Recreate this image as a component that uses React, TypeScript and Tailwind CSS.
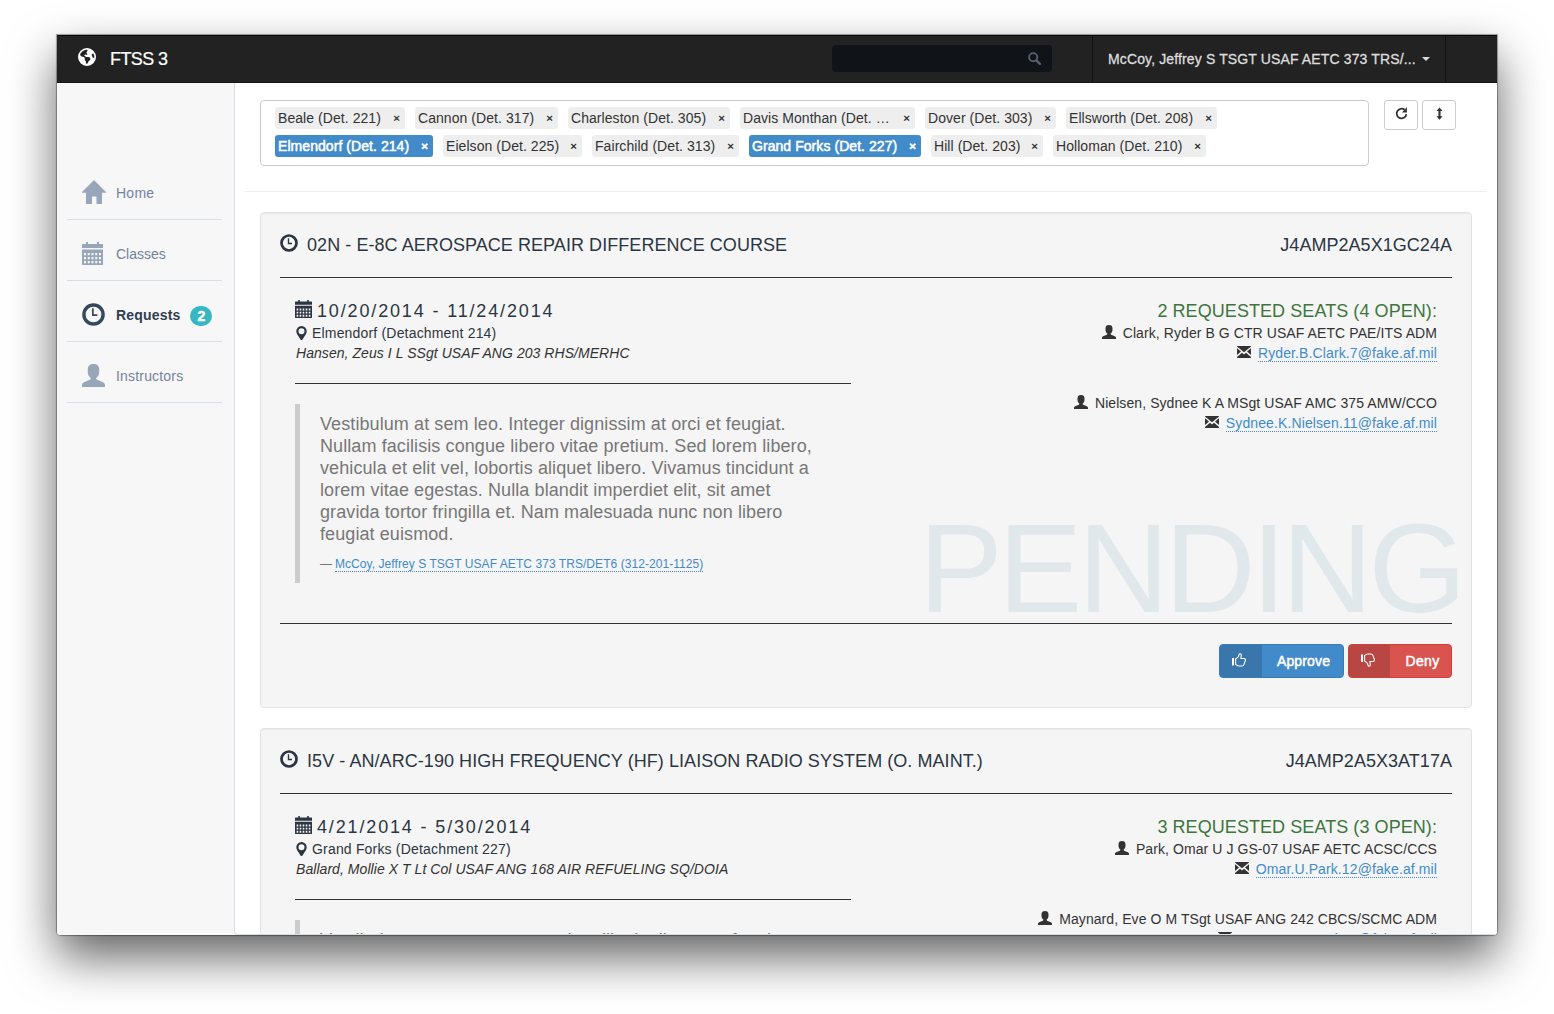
import React from "react";
import { FaEarthAmericas } from "react-icons/fa6";

type IconProps = { className?: string };

const HomeIcon = ({ className }: IconProps) => (
  <svg viewBox="0 0 24 24" fill="currentColor" className={className}>
    <path d="M12 0 0 12v.7h4V24h6v-7.5h4.500V24H20V12.700h4V12z" />
  </svg>
);

const CalendarIcon = ({ className }: IconProps) => (
  <svg viewBox="0 0 21 23" fill="currentColor" preserveAspectRatio="none" className={className}>
    <path d="M4 0h2v2h9V0h2v2h3.500l.5.500V6H0V2.500L.5 2H4z" />
    <path
      fillRule="evenodd"
      d="M0 7.500h21V22.500l-.5.500H.5l-.5-.500zM2 11v2.300h2V11zM5.750 11v2.300h2V11zM9.500 11v2.300h2V11zM13.250 11v2.300h2V11zM17 11v2.300h2V11zM2 15v2.300h2V15zM5.750 15v2.300h2V15zM9.500 15v2.300h2V15zM13.250 15v2.300h2V15zM17 15v2.300h2V15zM2 19v2.300h2V19zM5.750 19v2.300h2V19zM9.500 19v2.300h2V19zM13.250 19v2.300h2V19zM17 19v2.300h2V19z"
    />
  </svg>
);

const ClockIcon = ({ className }: IconProps) => (
  <svg viewBox="0 0 24 24" fill="none" stroke="currentColor" className={className}>
    <circle cx="12" cy="12" r="10" strokeWidth="3.6" />
    <path d="M11.300 5.500v7.200H16" strokeWidth="1.800" />
  </svg>
);

const UserIcon = ({ className }: IconProps) => (
  <svg viewBox="0 0 24 24" fill="currentColor" className={className}>
    <path d="M12 0C8 0 6 2 6 6v2c0 2.500 1 5 2.700 6.200.6.500.5 1.900-.3 2.300C5.500 17.700 2 19 .8 20 0 20.700 0 21.500 0 24h24c0-2.500 0-3.300-.8-4-1.200-1-4.700-2.300-7.600-3.500-.8-.4-.9-1.800-.3-2.300C17 13 18 10.500 18 8V6c0-4-2-6-6-6z" />
  </svg>
);

const PinIcon = ({ className }: IconProps) => (
  <svg viewBox="0 0 11 14" fill="currentColor" className={className}>
    <path
      fillRule="evenodd"
      d="M5.500 0A5.200 5.200 0 0 0 .3 5.200C.3 7 1.300 8.500 2.300 10l2.200 3.600c.4.600 1.600.6 2 0L8.700 10c1-1.500 2-3 2-4.800A5.200 5.200 0 0 0 5.500 0zm0 2.200a3 3 0 1 1 0 6 3 3 0 0 1 0-6z"
    />
  </svg>
);

const EnvelopeIcon = ({ className }: IconProps) => (
  <svg viewBox="0 0 14 12" fill="currentColor" className={className}>
    <path d="M0 0h14v.4L7 6.200 0 .4zM0 2.200 4 5.600 0 9zM14 2.200V9l-4-3.400zM5 6.700l2 1.700 2-1.700 5 4.200V12H0v-1.100z" />
  </svg>
);

const SearchIcon = ({ className }: IconProps) => (
  <svg viewBox="0 0 14 14" fill="none" stroke="currentColor" className={className}>
    <circle cx="5.600" cy="5.600" r="4.400" strokeWidth="2" />
    <path d="m9 9 3.800 3.800" strokeWidth="2.500" strokeLinecap="round" />
  </svg>
);

const RepeatIcon = ({ className }: IconProps) => (
  <svg viewBox="0 0 14 14" fill="none" className={className}>
    <path d="M10.300 3A5.200 5.200 0 1 0 12.200 7.600" stroke="currentColor" strokeWidth="1.900" />
    <path d="M12.800.4v5.400H7.400z" fill="currentColor" />
  </svg>
);

const ResizeIcon = ({ className }: IconProps) => (
  <svg viewBox="0 0 8 14" fill="currentColor" className={className}>
    <path d="M4 0 7.500 4H5.200v6h2.300L4 14 .5 10h2.300V4H.5z" />
  </svg>
);

const ThumbUpIcon = ({ className }: IconProps) => (
  <svg viewBox="0 0 14 14" fill="none" stroke="currentColor" className={className}>
    <path d="M1 5v7.500" strokeWidth="2" />
    <path
      d="M3.600 6v5.400c1 .9 2 1.600 3.400 1.600h3.200c1 0 1.500-.6 1.800-1.600l1.300-3.600c.4-1.300-.1-2.300-1.300-2.300H8.900L9.300 2C9.300.6 7.300.3 7 1.700L6.500 3.500C5.600 4.900 4.600 5.400 3.600 6z"
      strokeWidth="1.100"
    />
  </svg>
);

const navItems = [
  { label: "Home", Icon: HomeIcon, iconClass: "h-6 w-6", tracking: "tracking-[0.25px]" },
  { label: "Classes", Icon: CalendarIcon, iconClass: "h-[23px] w-[21px]", tracking: "tracking-normal" },
  { label: "Requests", Icon: ClockIcon, iconClass: "h-[23px] w-[23px]", tracking: "tracking-[0.18px]", badge: 2 },
  { label: "Instructors", Icon: UserIcon, iconClass: "h-[23px] w-[23px]", tracking: "tracking-[0.18px]" },
];

const filterRows = [
  [
    { name: "Beale (Det. 221)", width: "w-[130px]" },
    { name: "Cannon (Det. 317)", width: "w-[143px]" },
    { name: "Charleston (Det. 305)", width: "w-[162px]" },
    { name: "Davis Monthan (Det. …", width: "w-[175px]" },
    { name: "Dover (Det. 303)", width: "w-[131px]" },
    { name: "Ellsworth (Det. 208)", width: "w-[151px]" },
  ],
  [
    { name: "Elmendorf (Det. 214)", width: "w-[158px]", active: true },
    { name: "Eielson (Det. 225)", width: "w-[139px]" },
    { name: "Fairchild (Det. 313)", width: "w-[147px]" },
    { name: "Grand Forks (Det. 227)", width: "w-[172px]", active: true },
    { name: "Hill (Det. 203)", width: "w-[112px]" },
    { name: "Holloman (Det. 210)", width: "w-[153px]" },
  ],
];

type Request = {
  title: string;
  code: string;
  dates: string;
  location: string;
  instructor: string;
  seats: string;
  students: { name: string; email: string }[];
  comment: string[];
  author?: string;
  status?: string;
};

const requests: Request[] = [
  {
    title: "02N - E-8C AEROSPACE REPAIR DIFFERENCE COURSE",
    code: "J4AMP2A5X1GC24A",
    dates: "10/20/2014 - 11/24/2014",
    location: "Elmendorf (Detachment 214)",
    instructor: "Hansen, Zeus I L SSgt USAF ANG 203 RHS/MERHC",
    seats: "2 REQUESTED SEATS (4 OPEN):",
    students: [
      { name: "Clark, Ryder B G CTR USAF AETC PAE/ITS ADM", email: "Ryder.B.Clark.7@fake.af.mil" },
      { name: "Nielsen, Sydnee K A MSgt USAF AMC 375 AMW/CCO", email: "Sydnee.K.Nielsen.11@fake.af.mil" },
    ],
    comment: [
      "Vestibulum at sem leo. Integer dignissim at orci et feugiat.",
      "Nullam facilisis congue libero vitae pretium. Sed lorem libero,",
      "vehicula et elit vel, lobortis aliquet libero. Vivamus tincidunt a",
      "lorem vitae egestas. Nulla blandit imperdiet elit, sit amet",
      "gravida tortor fringilla et. Nam malesuada nunc non libero",
      "feugiat euismod.",
    ],
    author: "McCoy, Jeffrey S TSGT USAF AETC 373 TRS/DET6 (312-201-1125)",
    status: "PENDING",
  },
  {
    title: "I5V - AN/ARC-190 HIGH FREQUENCY (HF) LIAISON RADIO SYSTEM (O. MAINT.)",
    code: "J4AMP2A5X3AT17A",
    dates: "4/21/2014 - 5/30/2014",
    location: "Grand Forks (Detachment 227)",
    instructor: "Ballard, Mollie X T Lt Col USAF ANG 168 AIR REFUELING SQ/DOIA",
    seats: "3 REQUESTED SEATS (3 OPEN):",
    students: [
      { name: "Park, Omar U J GS-07 USAF AETC ACSC/CCS", email: "Omar.U.Park.12@fake.af.mil" },
      { name: "Maynard, Eve O M TSgt USAF ANG 242 CBCS/SCMC ADM", email: "Eve.O.Maynard.14@fake.af.mil" },
    ],
    comment: ["Vestibulum accumsan eros sed mollis dapibus nec feugiat"],
  },
];

function Navbar() {
  return (
    <header className="flex h-12 shrink-0 items-stretch border-y border-t-[#080808] border-b-[#161616] bg-[#222] text-white">
      <div className="flex flex-1 items-center pl-[21px]">
        <FaEarthAmericas className="mb-1 size-[18px]" />
        <span className="ml-[14px] text-[18px] tracking-[-0.6px] [-webkit-text-stroke:0.2px_white]">FTSS 3</span>
      </div>
      <div className="mt-[9px] mr-10 flex h-[27px] w-[220px] items-center justify-end rounded-[4px] bg-[#101317] pr-[11px] text-[#566270]">
        <SearchIcon className="size-[13px]" />
      </div>
      <div className="flex w-[354px] items-center border-x border-[#101010] pl-[15px] text-sm text-[#ddd]">
        <span className="tracking-[0.13px] whitespace-nowrap [-webkit-text-stroke:0.3px_#ddd]">
          McCoy, Jeffrey S TSGT USAF AETC 373 TRS/...
        </span>
        <span className="ml-1.5 border-x-4 border-t-4 border-x-transparent border-t-[#ddd]" />
      </div>
      <div className="w-[51px]" />
    </header>
  );
}

function Sidebar() {
  return (
    <nav className="w-[177px] shrink-0 bg-[#f7f7f7] pt-[76px] pr-3 pl-2.5">
      {navItems.map(({ label, Icon, iconClass, tracking, badge }) => (
        <a
          key={label}
          className={`flex h-[61px] items-center border-b border-[#d6dfe8] pt-1.5 pl-[15px] text-sm ${
            badge ? "font-bold text-[#2f3e52]" : "text-[#73839b]"
          }`}
        >
          <span className={`w-[34px] ${badge ? "text-[#34495e]" : "text-[#98a6b9]"}`}>
            <Icon className={iconClass} />
          </span>
          <span className={`mt-0.5 ${tracking}`}>{label}</span>
          {badge && (
            <span className="mt-[3px] ml-2.5 flex h-5 w-[22px] items-center justify-center rounded-[10px] bg-[#36b7c1] text-sm text-white [-webkit-text-stroke:0.4px_white]">
              {badge}
            </span>
          )}
        </a>
      ))}
    </nav>
  );
}

function FilterBar() {
  return (
    <div className="flex items-start">
      <div className="flex h-[66px] w-[1109px] flex-col gap-1.5 rounded-[4px] border border-[#ccc] bg-white pt-1.5 pl-3.5">
        {filterRows.map((row, i) => (
          <div key={i} className="flex gap-2.5">
            {row.map((tag) => (
              <span
                key={tag.name}
                className={`flex h-[22px] items-center justify-between rounded-[3px] pr-[5px] pl-[3px] text-sm whitespace-nowrap ${tag.width} ${
                  tag.active ? "bg-[#428bca] text-white [-webkit-text-stroke:0.5px_white]" : "bg-[#eee] text-[#333]"
                }`}
              >
                <span className="tracking-[0.06px]">{tag.name}</span>
                <span className="mt-px text-[11.5px] font-bold">×</span>
              </span>
            ))}
          </div>
        ))}
      </div>
      <button className="ml-[15px] flex h-[30px] w-[34px] items-center justify-center rounded-[3px] border border-[#ccc] bg-white pb-[3px] text-[#333]">
        <RepeatIcon className="size-[13px]" />
      </button>
      <button className="ml-1 flex h-[30px] w-[34px] items-center justify-center rounded-[3px] border border-[#ccc] bg-white pb-[3px] text-[#333]">
        <ResizeIcon className="h-[13px] w-[7px]" />
      </button>
    </div>
  );
}

function RequestCard({ request }: { request: Request }) {
  return (
    <article className="relative h-[496px] w-[1212px] shrink-0 rounded-[4px] border border-[#e3e3e3] bg-[#f5f5f5] px-[19px] text-sm leading-5 text-[#333] shadow-[inset_0_1px_1px_rgba(0,0,0,0.05)]">
      <h2 className="flex h-[65px] items-center border-b border-[#333] text-[18px] text-[#2c3542]">
        <ClockIcon className="mb-[5px] size-[18px]" />
        <span className="ml-[9px] flex-1 tracking-[0.06px]">{request.title}</span>
        <span className="tracking-[0.04px]">{request.code}</span>
      </h2>
      <div className="flex h-[345px] justify-between px-[15px] pt-[21px]">
        <section className="w-[556px]">
          <h3 className="flex h-6 items-start pt-px text-[18px] leading-[22px] text-[#2c3542]">
            <CalendarIcon className="h-[18px] w-[17px]" />
            <span className="ml-[5px] tracking-[1.85px]">{request.dates}</span>
          </h3>
          <p className="flex items-center text-[#2c3542]">
            <PinIcon className="mb-px ml-[1px] h-3.5 w-[11px]" />
            <span className="ml-[5px] tracking-[0.18px]">{request.location}</span>
          </p>
          <p className="h-[41px] border-b border-[#333] pl-px tracking-[0.055px] italic">{request.instructor}</p>
          <blockquote className="mt-5 border-l-5 border-[#ccc] pt-[9px] pb-[11px] pl-5">
            <p className="text-[18px] leading-[22px] tracking-[0.09px] whitespace-nowrap text-[#777]">
              {request.comment.map((line) => (
                <span key={line} className="block">
                  {line}
                </span>
              ))}
            </p>
            {request.author && (
              <footer className="flex h-[27px] items-end text-xs leading-[14px] text-[#777]">
                <span className="mb-px w-[15px]">—</span>
                <a className="border-b border-dotted border-[#428bca] tracking-[0.06px] text-[#428bca]">
                  {request.author}
                </a>
              </footer>
            )}
          </blockquote>
        </section>
        <section className="flex flex-col items-end">
          <h3 className="h-6 pt-px text-[18px] leading-[22px] tracking-[0.07px] text-[#3c763d]">{request.seats}</h3>
          {request.students.map((student) => (
            <div key={student.email} className="mb-[30px] flex flex-col items-end">
              <p className="flex items-center">
                <UserIcon className="mr-[7px] mb-[3px] size-3.5" />
                <span className="tracking-[0.08px]">{student.name}</span>
              </p>
              <p className="flex h-5 items-center">
                <EnvelopeIcon className="mr-[7px] mb-[3px] h-3 w-3.5" />
                <a className="mt-px border-b border-dotted border-[#428bca] leading-4 tracking-[0.11px] text-[#428bca]">
                  {student.email}
                </a>
              </p>
            </div>
          ))}
        </section>
      </div>
      {request.status && (
        <div className="pointer-events-none absolute right-[9px] bottom-[75px] text-[126px] leading-[126px] tracking-[-4.4px] text-[#e0e8eb]">
          {request.status}
        </div>
      )}
      <div className="relative flex justify-end gap-1 border-t border-[#333] pt-5 text-white">
        <button className="flex h-[34px] w-[125px] overflow-hidden rounded-[4px] border border-[#357ebd] bg-[#428bca]">
          <span className="flex h-full w-[42px] items-center justify-center bg-[#3876ac] pr-1 pb-0.5">
            <ThumbUpIcon className="size-3.5" />
          </span>
          <span className="flex h-full flex-1 items-center justify-center pl-0.5 tracking-[0.15px] [-webkit-text-stroke:0.5px_white]">
            Approve
          </span>
        </button>
        <button className="flex h-[34px] w-[104px] overflow-hidden rounded-[4px] border border-[#d43f3a] bg-[#d9534f]">
          <span className="flex h-full w-[41px] items-center justify-center bg-[#b84743] pr-[3px] pb-0.5">
            <ThumbUpIcon className="size-3.5 -scale-y-100" />
          </span>
          <span className="flex h-full flex-1 items-center justify-center pl-1 tracking-[0.3px] [-webkit-text-stroke:0.5px_white]">
            Deny
          </span>
        </button>
      </div>
    </article>
  );
}

export default function App() {
  return (
    <div className="h-[1014px] w-[1554px] overflow-hidden bg-white pt-[35px] pl-[57px] font-['Liberation_Sans',Arial,sans-serif]">
      <div className="flex h-[900px] w-[1440px] flex-col overflow-hidden rounded-b-[4px] bg-white shadow-[0_0_1px_1px_rgba(0,0,0,0.35),0_22px_48px_rgba(0,0,0,0.62)]">
        <Navbar />
        <div className="flex min-h-0 flex-1 bg-[#f7f7f7]">
          <Sidebar />
          <main className="flex min-w-0 flex-1 flex-col overflow-hidden rounded-bl-[4px] border-b border-l border-[#d5dee4] bg-white pt-[17px] pl-[25px]">
            <FilterBar />
            <hr className="mt-[25px] mb-5 -ml-[15px] w-[1242px] shrink-0 border-[#eee]" />
            <div className="flex flex-col gap-5">
              {requests.map((request) => (
                <RequestCard key={request.code} request={request} />
              ))}
            </div>
          </main>
        </div>
      </div>
    </div>
  );
}
